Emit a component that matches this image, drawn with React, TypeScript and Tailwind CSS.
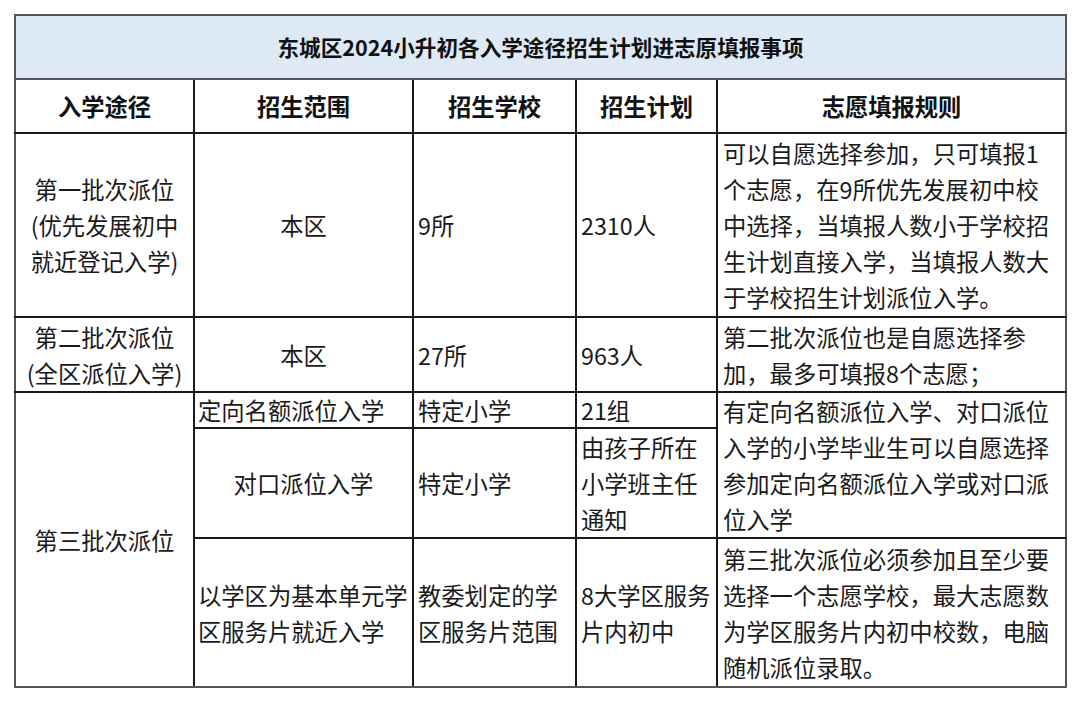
import React from "react";

const B = "border-2 border-[#1a1a1a]";
const cellBase = `${B} align-middle text-[23.3px] leading-[36px] text-[#1a1a1a] p-0`;

export default function App() {
  return (
    <div
      className="w-[1080px] h-[702px] bg-white pt-[14px] pl-[14px]"
      style={{ fontFamily: '"Noto Sans CJK SC", "Noto Sans", sans-serif' }}
    >
      <table className="border-collapse table-fixed w-[1051px]">
        <colgroup>
          <col className="w-[179px]" />
          <col className="w-[219px]" />
          <col className="w-[163px]" />
          <col className="w-[141px]" />
          <col className="w-[349px]" />
        </colgroup>
        <tbody>
          <tr className="h-[64px]">
            <td
              colSpan={5}
              className={`${B} border-[#555] bg-[#dde9f5] text-center font-bold text-[21.6px] text-[#111]`}
            >
              东城区2024小升初各入学途径招生计划进志原填报事项
            </td>
          </tr>
          <tr className="h-[54px]">
            {["入学途径", "招生范围", "招生学校", "招生计划", "志愿填报规则"].map((t, i) => (
              <td
                key={t}
                className={`${cellBase} text-center font-bold text-[#111] ${i === 0 ? "border-l-[#555]" : ""} ${i === 4 ? "border-r-[#555]" : ""}`}
              >
                {t}
              </td>
            ))}
          </tr>
          <tr className="h-[184px]">
            <td className={`${cellBase} text-center border-l-[#555]`}>
              第一批次派位
              <br />
              (优先发展初中
              <br />
              就近登记入学)
            </td>
            <td className={`${cellBase} text-center`}>本区</td>
            <td className={`${cellBase} pl-[4px]`}>9所</td>
            <td className={`${cellBase} pl-[4px]`}>2310人</td>
            <td className={`${cellBase} pl-[5px] whitespace-nowrap border-r-[#555]`}>
              可以自愿选择参加，只可填报1
              <br />
              个志愿，在9所优先发展初中校
              <br />
              中选择，当填报人数小于学校招
              <br />
              生计划直接入学，当填报人数大
              <br />
              于学校招生计划派位入学。
            </td>
          </tr>
          <tr className="h-[75px]">
            <td className={`${cellBase} text-center border-l-[#555]`}>
              第二批次派位
              <br />
              (全区派位入学)
            </td>
            <td className={`${cellBase} text-center`}>本区</td>
            <td className={`${cellBase} pl-[4px]`}>27所</td>
            <td className={`${cellBase} pl-[4px]`}>963人</td>
            <td className={`${cellBase} pl-[5px] whitespace-nowrap border-r-[#555]`}>
              第二批次派位也是自愿选择参
              <br />
              加，最多可填报8个志愿；
            </td>
          </tr>
          <tr className="h-[36px]">
            <td rowSpan={3} className={`${cellBase} text-center border-l-[#555] border-b-[#555]`}>
              第三批次派位
            </td>
            <td className={`${cellBase} !leading-[33px] pl-[3px] whitespace-nowrap`}>定向名额派位入学</td>
            <td className={`${cellBase} !leading-[33px] pl-[4px]`}>特定小学</td>
            <td className={`${cellBase} !leading-[33px] pl-[4px]`}>21组</td>
            <td rowSpan={2} className={`${cellBase} pl-[5px] whitespace-nowrap border-r-[#555]`}>
              有定向名额派位入学、对口派位
              <br />
              入学的小学毕业生可以自愿选择
              <br />
              参加定向名额派位入学或对口派
              <br />
              位入学
            </td>
          </tr>
          <tr className="h-[110px]">
            <td className={`${cellBase} text-center`}>对口派位入学</td>
            <td className={`${cellBase} pl-[4px]`}>特定小学</td>
            <td className={`${cellBase} pl-[4px] whitespace-nowrap`}>
              由孩子所在
              <br />
              小学班主任
              <br />
              通知
            </td>
          </tr>
          <tr className="h-[149px]">
            <td className={`${cellBase} pl-[3px] whitespace-nowrap border-b-[#555]`}>
              以学区为基本单元学
              <br />
              区服务片就近入学
            </td>
            <td className={`${cellBase} pl-[4px] whitespace-nowrap border-b-[#555]`}>
              教委划定的学
              <br />
              区服务片范围
            </td>
            <td className={`${cellBase} pl-[4px] whitespace-nowrap border-b-[#555]`}>
              8大学区服务
              <br />
              片内初中
            </td>
            <td className={`${cellBase} pl-[5px] whitespace-nowrap border-r-[#555] border-b-[#555]`}>
              第三批次派位必须参加且至少要
              <br />
              选择一个志愿学校，最大志愿数
              <br />
              为学区服务片内初中校数，电脑
              <br />
              随机派位录取。
            </td>
          </tr>
        </tbody>
      </table>
    </div>
  );
}
